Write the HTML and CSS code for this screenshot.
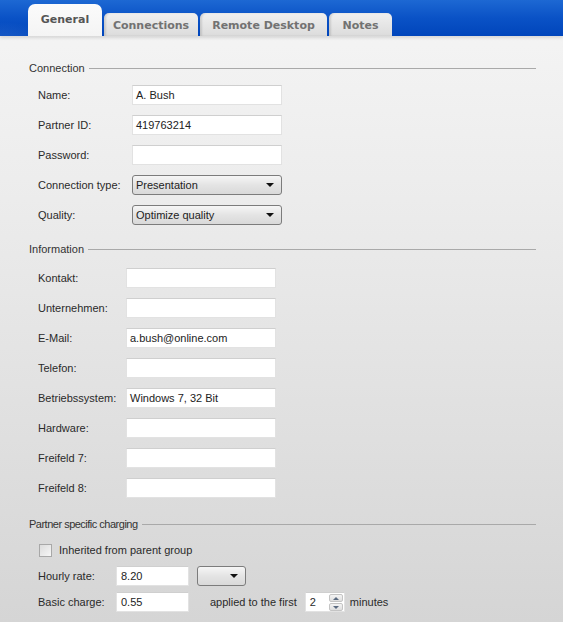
FILE: index.html
```html
<!DOCTYPE html>
<html>
<head>
<meta charset="utf-8">
<link rel="stylesheet" href="styles.css">
</head>
<body>
<div class="header">
  <div class="tab active">General</div>
  <div class="tab w-conn">Connections</div>
  <div class="tab w-rd">Remote Desktop</div>
  <div class="tab w-notes">Notes</div>
</div>
<div class="content">
  <div class="section-title"><span>Connection</span><i></i></div>
  <div class="rows s1">
    <div class="row"><label>Name:</label><div class="field">A. Bush</div></div>
    <div class="row"><label>Partner ID:</label><div class="field">419763214</div></div>
    <div class="row"><label>Password:</label><div class="field"></div></div>
    <div class="row"><label>Connection type:</label><div class="select">Presentation<b></b></div></div>
    <div class="row"><label>Quality:</label><div class="select">Optimize quality<b></b></div></div>
  </div>

  <div class="section-title t2"><span>Information</span><i></i></div>
  <div class="rows s2">
    <div class="row"><label>Kontakt:</label><div class="field"></div></div>
    <div class="row"><label>Unternehmen:</label><div class="field"></div></div>
    <div class="row"><label>E-Mail:</label><div class="field">a.bush@online.com</div></div>
    <div class="row"><label>Telefon:</label><div class="field"></div></div>
    <div class="row"><label>Betriebssystem:</label><div class="field">Windows 7, 32 Bit</div></div>
    <div class="row"><label>Hardware:</label><div class="field"></div></div>
    <div class="row"><label>Freifeld 7:</label><div class="field"></div></div>
    <div class="row"><label>Freifeld 8:</label><div class="field"></div></div>
  </div>

  <div class="section-title t3"><span>Partner specific charging</span><i></i></div>
  <div class="rows s3">
    <div class="check-row"><span class="checkbox"></span><span>Inherited from parent group</span></div>
    <div class="row small"><label>Hourly rate:</label><div class="field">8.20</div><div class="select mini"><b></b></div></div>
    <div class="row small"><label>Basic charge:</label><div class="field">0.55</div>
      <span class="applied">applied to the first</span>
      <div class="spin"><span class="val">2</span><span class="arrows"><em class="up"></em><em class="down"></em></span></div>
      <span class="minutes">minutes</span>
    </div>
  </div>
</div>
</body>
</html>
```
FILE: styles.css
```css
html, body {
  margin: 0;
  padding: 0;
}
body {
  width: 563px;
  height: 622px;
  overflow: hidden;
  font-family: "Liberation Sans", Arial, sans-serif;
  font-size: 11px;
  color: #2a2a2a;
  background: linear-gradient(to bottom, #f5f5f5 0px, #ececec 200px, #d5d5d5 622px);
}
.header {
  height: 36px;
  box-sizing: border-box;
  padding-left: 28px;
  display: flex;
  align-items: flex-end;
  gap: 2px;
  background:
    radial-gradient(ellipse 90px 40px at 0px 50px, rgba(120,170,240,0.35), rgba(120,170,240,0) 70%),
    linear-gradient(to bottom, #1d68d3 0%, #0a52c6 50%, #0045bb 100%);
  box-shadow: 0 2px 3px rgba(0,0,0,0.12);
  position: relative;
}
.tab {
  font-family: "DejaVu Sans", Verdana, sans-serif;
  font-weight: bold;
  font-size: 11px;
  color: #727272;
  height: 23px;
  display: flex;
  align-items: center;
  justify-content: center;
  background: linear-gradient(to bottom, #f0f0f0, #dcdcdc);
  border-radius: 5px 5px 0 0;
  box-shadow: inset 2px 0 2px rgba(0,0,0,0.12);
  box-sizing: border-box;
  padding-top: 1px;
}
.tab.active {
  width: 74px;
  height: 32px;
  color: #555;
  background: linear-gradient(to bottom, #fbfbfb, #f4f4f4);
  border-radius: 7px 7px 0 0;
  box-shadow: none;
  padding-top: 0;
  padding-bottom: 2px;
}
.w-conn { width: 94px; }
.w-rd { width: 127px; }
.w-notes { width: 63px; }

.content {
  padding: 24px 27px 0 29px;
}
.section-title {
  display: flex;
  align-items: center;
  height: 16px;
  color: #333;
}
.section-title i {
  flex: 1;
  height: 1px;
  background: #a9a9a9;
  margin-left: 4px;
  margin-top: 1px;
}
.t2 { margin-top: 11px; }
.t3 { margin-top: 13px; }
.t3 span { letter-spacing: -0.5px; }

.rows { padding-left: 9px; }
.s1 { margin-top: 4px; }
.s2 { margin-top: 6px; }
.s3 { margin-top: 8px; }

.row {
  display: flex;
  align-items: center;
  height: 30px;
}
.row label { flex: none; }
.s1 .row label { width: 94px; }
.s2 .row label { width: 88px; }
.s3 .row label { width: 78px; }

.field {
  width: 150px;
  height: 20px;
  box-sizing: border-box;
  background: #fff;
  border: 1px solid #e2e2e2;
  border-top-color: #cfcfcf;
  padding-left: 3px;
  display: flex;
  align-items: center;
  color: #222;
}

.select {
  width: 150px;
  height: 20px;
  box-sizing: border-box;
  border: 1px solid #7c7c7c;
  border-radius: 3px;
  background: linear-gradient(to bottom, #f6f6f6, #e4e4e4 50%, #d9d9d9);
  padding-left: 3px;
  display: flex;
  align-items: center;
  position: relative;
  color: #222;
}
.select b {
  position: absolute;
  right: 7px;
  top: 7px;
  width: 0;
  height: 0;
  border-left: 4px solid transparent;
  border-right: 4px solid transparent;
  border-top: 4px solid #111;
}
.select.mini {
  width: 49px;
  margin-left: 8px;
  border-radius: 3px;
}

.check-row {
  display: flex;
  align-items: center;
  height: 20px;
  padding-left: 1px;
}
.checkbox {
  width: 13px;
  height: 13px;
  box-sizing: border-box;
  border: 1px solid #a8a8a8;
  background: linear-gradient(135deg, #dcdcdc, #f6f6f6);
  margin-right: 7px;
}
.row.small {
  height: 20px;
  margin-top: 6px;
}
.row.small .field {
  width: 73px;
  height: 20px;
  padding-left: 4px;
}
.applied { margin-left: 21px; }
.spin {
  margin-left: 8px;
  width: 40px;
  height: 20px;
  box-sizing: border-box;
  background: #fff;
  border: 1px solid #e2e2e2;
  border-top-color: #cfcfcf;
  display: flex;
  align-items: center;
  justify-content: space-between;
  padding-left: 4px;
  padding-right: 1px;
}
.arrows {
  width: 14px;
  height: 17px;
  display: flex;
  flex-direction: column;
  gap: 1px;
}
.arrows em {
  flex: 1;
  background: linear-gradient(to bottom, #f4f4f4, #dedede);
  border: 1px solid #c4c4c4;
  border-radius: 2px;
  position: relative;
}
.arrows em::after {
  content: "";
  position: absolute;
  left: 3px;
  top: 2px;
  width: 0;
  height: 0;
  border-left: 3px solid transparent;
  border-right: 3px solid transparent;
}
.arrows .up::after { border-bottom: 3px solid #5a6a80; }
.arrows .down::after { border-top: 3px solid #5a6a80; }
.minutes { margin-left: 5px; }
```
